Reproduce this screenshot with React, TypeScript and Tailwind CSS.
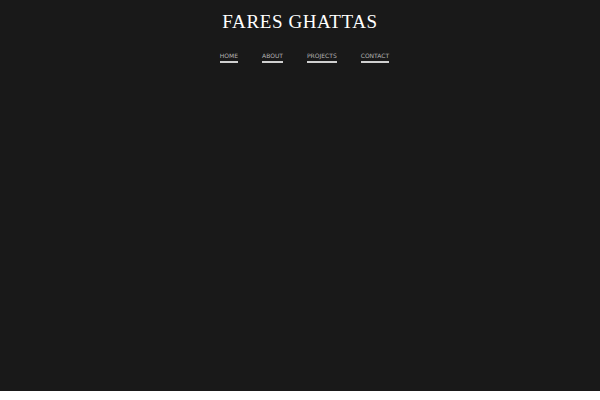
export default function App() {
  const links = ["HOME", "ABOUT", "PROJECTS", "CONTACT"];
  return (
    <div className="w-full bg-white">
      <div className="h-[391px] bg-[#191919] flex flex-col items-center">
        <h1 className="mt-[12px] text-[19px] leading-[20px] tracking-[0.6px] text-white" style={{ fontFamily: '"Liberation Serif", serif' }}>
          FARES GHATTAS
        </h1>
        <nav className="mt-[19px] ml-[9px] flex gap-[24px]" style={{ fontFamily: '"DejaVu Sans", sans-serif' }}>
          {links.map((l) => (
            <a key={l} className="text-[6px] leading-[9px] text-[#b4b4b4] border-b-2 border-[#cfcfcf] pb-[1px]">
              {l}
            </a>
          ))}
        </nav>
      </div>
    </div>
  );
}
